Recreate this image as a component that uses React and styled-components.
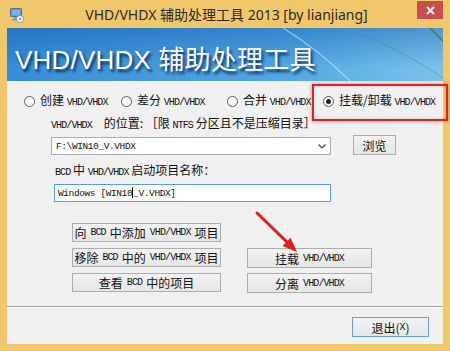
import React from 'react';
import styled, { createGlobalStyle } from 'styled-components';

const GlobalStyle = createGlobalStyle`
  html, body {
    margin: 0;
    padding: 0;
    background: #ffffff;
  }
  body {
    font-family: "Noto Sans CJK SC", sans-serif;
  }
`;

const Window = styled.div`
  width: 450px;
  height: 351px;
  background: #f1c76b;
  display: flex;
  flex-direction: column;
  overflow: hidden;
`;

const TitleBar = styled.div`
  height: 28px;
  flex-shrink: 0;
  display: grid;
  grid-template-columns: 26px 1fr 26px;
  padding: 0 7px 0 10px;
  align-items: center;
`;

const TitleText = styled.div`
  text-align: center;
  font-family: "Noto Sans", "Noto Sans CJK SC", sans-serif;
  font-size: 14px;
  color: #2b2b2b;
  line-height: 28px;
  padding-top: 1px;
`;

const CloseButton = styled.div`
  align-self: start;
  width: 26px;
  height: 18px;
  margin-top: 1px;
  background: #c84d4d;
  display: flex;
  align-items: center;
  justify-content: center;
`;

const Client = styled.div`
  flex: 1;
  margin: 0 7px 7px 7px;
  background: #f0f0f0;
  display: flex;
  flex-direction: column;
  position: relative;
`;

const Banner = styled.div`
  height: 53px;
  flex-shrink: 0;
  position: relative;
  overflow: hidden;
  display: flex;
  align-items: center;
  padding: 6px 0 0 8px;
  box-sizing: border-box;
  background:
    linear-gradient(to bottom, rgba(10, 80, 170, 0.4), rgba(255, 255, 255, 0) 75%),
    linear-gradient(to right, #378dd6, #52a8e3 65%, #7cc3ec);
`;

const BannerArt = styled.svg`
  position: absolute;
  inset: 0;
`;

const BannerTitle = styled.h1`
  margin: 0;
  position: relative;
  font-family: "Liberation Sans", "Noto Sans CJK SC", sans-serif;
  font-weight: normal;
  font-size: 26px;
  color: #ffffff;
  letter-spacing: 0.2px;
  text-shadow: 2px 3px 3px rgba(0, 25, 70, 0.85);
`;

const Form = styled.div`
  padding: 12px 0 0 17px;
  display: flex;
  flex-direction: column;
  font-size: 12px;
  color: #111;
`;

// latin runs in the old bitmap font are narrow and tall
const Mono = styled.span`
  font-family: "Liberation Mono", monospace;
  font-size: ${p => p.size || 10}px;
  letter-spacing: ${p => p.ls ?? -0.9}px;
`;

const RadioRow = styled.div`
  display: grid;
  grid-template-columns: 97px 106px 96px auto;
  height: 14px;
  align-items: center;
`;

const RadioItem = styled.label`
  display: flex;
  align-items: center;
  gap: 5px;
  position: relative;
  white-space: nowrap;
  line-height: 14px;

  ${p => p.highlight && `
    &::before {
      content: "";
      position: absolute;
      left: -11px;
      top: -9px;
      right: -5px;
      bottom: -11px;
      border: 2px solid #e3201b;
      box-shadow: 0 0 4px rgba(0, 0, 0, 0.35), inset 0 0 3px rgba(0, 0, 0, 0.2);
    }
  `}
`;

const RadioCircle = styled.span`
  width: 11px;
  height: 11px;
  box-sizing: border-box;
  border: 1px solid #5a5a5a;
  border-radius: 50%;
  background: #ffffff;
  display: flex;
  align-items: center;
  justify-content: center;

  &::after {
    content: "";
    width: 5px;
    height: 5px;
    border-radius: 50%;
    background: ${p => (p.checked ? '#222' : 'transparent')};
  }
`;

const Label = styled.div`
  margin: ${p => p.mt}px 0 0 ${p => p.ml}px;
  line-height: 14px;
  white-space: pre;
`;

const ComboRow = styled.div`
  margin: 2px 0 0 27px;
  display: flex;
  align-items: flex-end;
  height: 20px;
`;

const Combo = styled.div`
  width: 280px;
  height: 18px;
  box-sizing: border-box;
  border: 1px solid #abadb3;
  background: #ffffff;
  display: flex;
  align-items: center;
  justify-content: space-between;
  padding: 0 4px 0 4px;
`;

const FieldText = styled.span`
  font-family: "Liberation Mono", monospace;
  font-size: 9.5px;
  letter-spacing: -0.4px;
  color: #111;
  white-space: pre;
`;

const Caret = styled.span`
  display: inline-block;
  width: 1px;
  height: 11px;
  background: #000;
  vertical-align: -2px;
`;

const TextInput = styled.div`
  margin: 4px 0 0 30px;
  width: 277px;
  height: 18px;
  box-sizing: border-box;
  border: 1px solid #569de5;
  background: #ffffff;
  display: flex;
  align-items: center;
  padding-left: 3px;
`;

const Button = styled.div`
  box-sizing: border-box;
  height: ${p => p.h || 19}px;
  width: ${p => (p.w ? `${p.w}px` : 'auto')};
  border: 1px solid ${p => (p.primary ? '#5fa3e6' : '#adadad')};
  background: linear-gradient(to bottom, #f2f2f2, #e6e6e6);
  display: flex;
  align-items: center;
  justify-content: center;
  gap: 4px;
  white-space: nowrap;
  font-size: 12px;
  color: #111;
  grid-column: ${p => p.col || 'auto'};
  grid-row: ${p => p.row || 'auto'};
`;

const ButtonGrid = styled.div`
  margin: 21px 0 0 48px;
  display: grid;
  grid-template-columns: 149px 125px;
  grid-auto-rows: 19px;
  column-gap: 26px;
  row-gap: 6px;
`;

const Separator = styled.div`
  margin-top: 14px;
  border-top: 1px solid #a0a0a0;
  border-bottom: 1px solid #ffffff;
`;

const Footer = styled.div`
  display: flex;
  justify-content: flex-end;
  padding: 9px 14px 0 0;
`;

const ArrowOverlay = styled.svg`
  position: absolute;
  left: 245px;
  top: 180px;
  pointer-events: none;
`;

function AppIcon() {
  return (
    <svg width="14" height="16" viewBox="0 0 14 16">
      <rect x="0.5" y="1.5" width="11" height="8" rx="1" fill="#3a8ad8" stroke="#5b6b80" />
      <rect x="1.5" y="2.5" width="9" height="6" fill="#6fb6f0" />
      <rect x="4" y="10" width="4" height="2" fill="#8a96a4" />
      <rect x="2" y="12" width="8" height="1.5" fill="#8a96a4" />
      <circle cx="10" cy="12" r="3.6" fill="#e8eef5" stroke="#7d8ea3" strokeWidth="0.8" />
      <circle cx="10" cy="12" r="1" fill="#6a7c92" />
    </svg>
  );
}

function Radio({ checked, highlight, children }) {
  return (
    <RadioItem highlight={highlight}>
      <RadioCircle checked={checked} />
      <span>{children}</span>
    </RadioItem>
  );
}

export default function App() {
  return (
    <>
      <GlobalStyle />
      <Window>
        <TitleBar>
          <AppIcon />
          <TitleText>VHD/VHDX 辅助处理工具 2013 [by lianjiang]</TitleText>
          <CloseButton>
            <svg width="9" height="9" viewBox="0 0 9 9">
              <path d="M1 1 L8 8 M8 1 L1 8" stroke="#ffffff" strokeWidth="2" />
            </svg>
          </CloseButton>
        </TitleBar>

        <Client>
          <Banner>
            <BannerArt width="436" height="53" viewBox="0 0 436 53">
              <path d="M276 0 Q 312 22 343 53" stroke="rgba(230,245,255,0.55)" strokeWidth="1.2" fill="none" />
              <path d="M346 3 Q 395 22 436 50" stroke="rgba(60,140,90,0.45)" strokeWidth="1" fill="none" />
              <path d="M423 0 L436 13" stroke="#2f8a3e" strokeWidth="1.5" fill="none" />
            </BannerArt>
            <BannerTitle>VHD/VHDX 辅助处理工具</BannerTitle>
          </Banner>

          <Form>
            <RadioRow>
              <Radio>创建 <Mono>VHD/VHDX</Mono></Radio>
              <Radio>差分 <Mono>VHD/VHDX</Mono></Radio>
              <Radio>合并 <Mono>VHD/VHDX</Mono></Radio>
              <Radio checked highlight>挂载/卸载 <Mono>VHD/VHDX</Mono></Radio>
            </RadioRow>

            <Label mt={9} ml={27}>
              <Mono>VHD/VHDX</Mono>{'　的位置: ［限 '}<Mono>NTFS</Mono>{' 分区且不是压缩目录］'}
            </Label>

            <ComboRow>
              <Combo>
                <FieldText>F:\WIN10_V.VHDX</FieldText>
                <svg width="8" height="5" viewBox="0 0 8 5">
                  <path d="M0.5 0.5 L4 4 L7.5 0.5" stroke="#444" strokeWidth="1.2" fill="none" />
                </svg>
              </Combo>
              <Button w={43} h={20} style={{ marginLeft: 22 }}>浏览</Button>
            </ComboRow>

            <Label mt={8} ml={31}>
              <Mono>BCD</Mono> 中 <Mono>VHD/VHDX</Mono> 启动项目名称：
            </Label>

            <TextInput>
              <FieldText>Windows [WIN10<Caret />_V.VHDX]</FieldText>
            </TextInput>

            <ButtonGrid>
              <Button col={1} row={1}>向<Mono>BCD</Mono>中添加<Mono>VHD/VHDX</Mono>项目</Button>
              <Button col={1} row={2}>移除<Mono>BCD</Mono>中的<Mono>VHD/VHDX</Mono>项目</Button>
              <Button col={1} row={3}>查看<Mono>BCD</Mono>中的项目</Button>
              <Button col={2} row={2} h={20}>挂载<Mono>VHD/VHDX</Mono></Button>
              <Button col={2} row={3} h={20}>分离<Mono>VHD/VHDX</Mono></Button>
            </ButtonGrid>
          </Form>

          <Separator />

          <Footer>
            <Button primary w={77} h={20} style={{ gap: 0 }}>退出(<Mono ls={0}>X</Mono>)</Button>
          </Footer>

          <ArrowOverlay width="52" height="52" viewBox="0 0 52 52">
            <path d="M5 5 L36 35" stroke="#e31c17" strokeWidth="3" strokeLinecap="round" />
            <polygon points="45,44 30.5,38 38.5,29.8" fill="#e31c17" />
          </ArrowOverlay>
        </Client>
      </Window>
    </>
  );
}
